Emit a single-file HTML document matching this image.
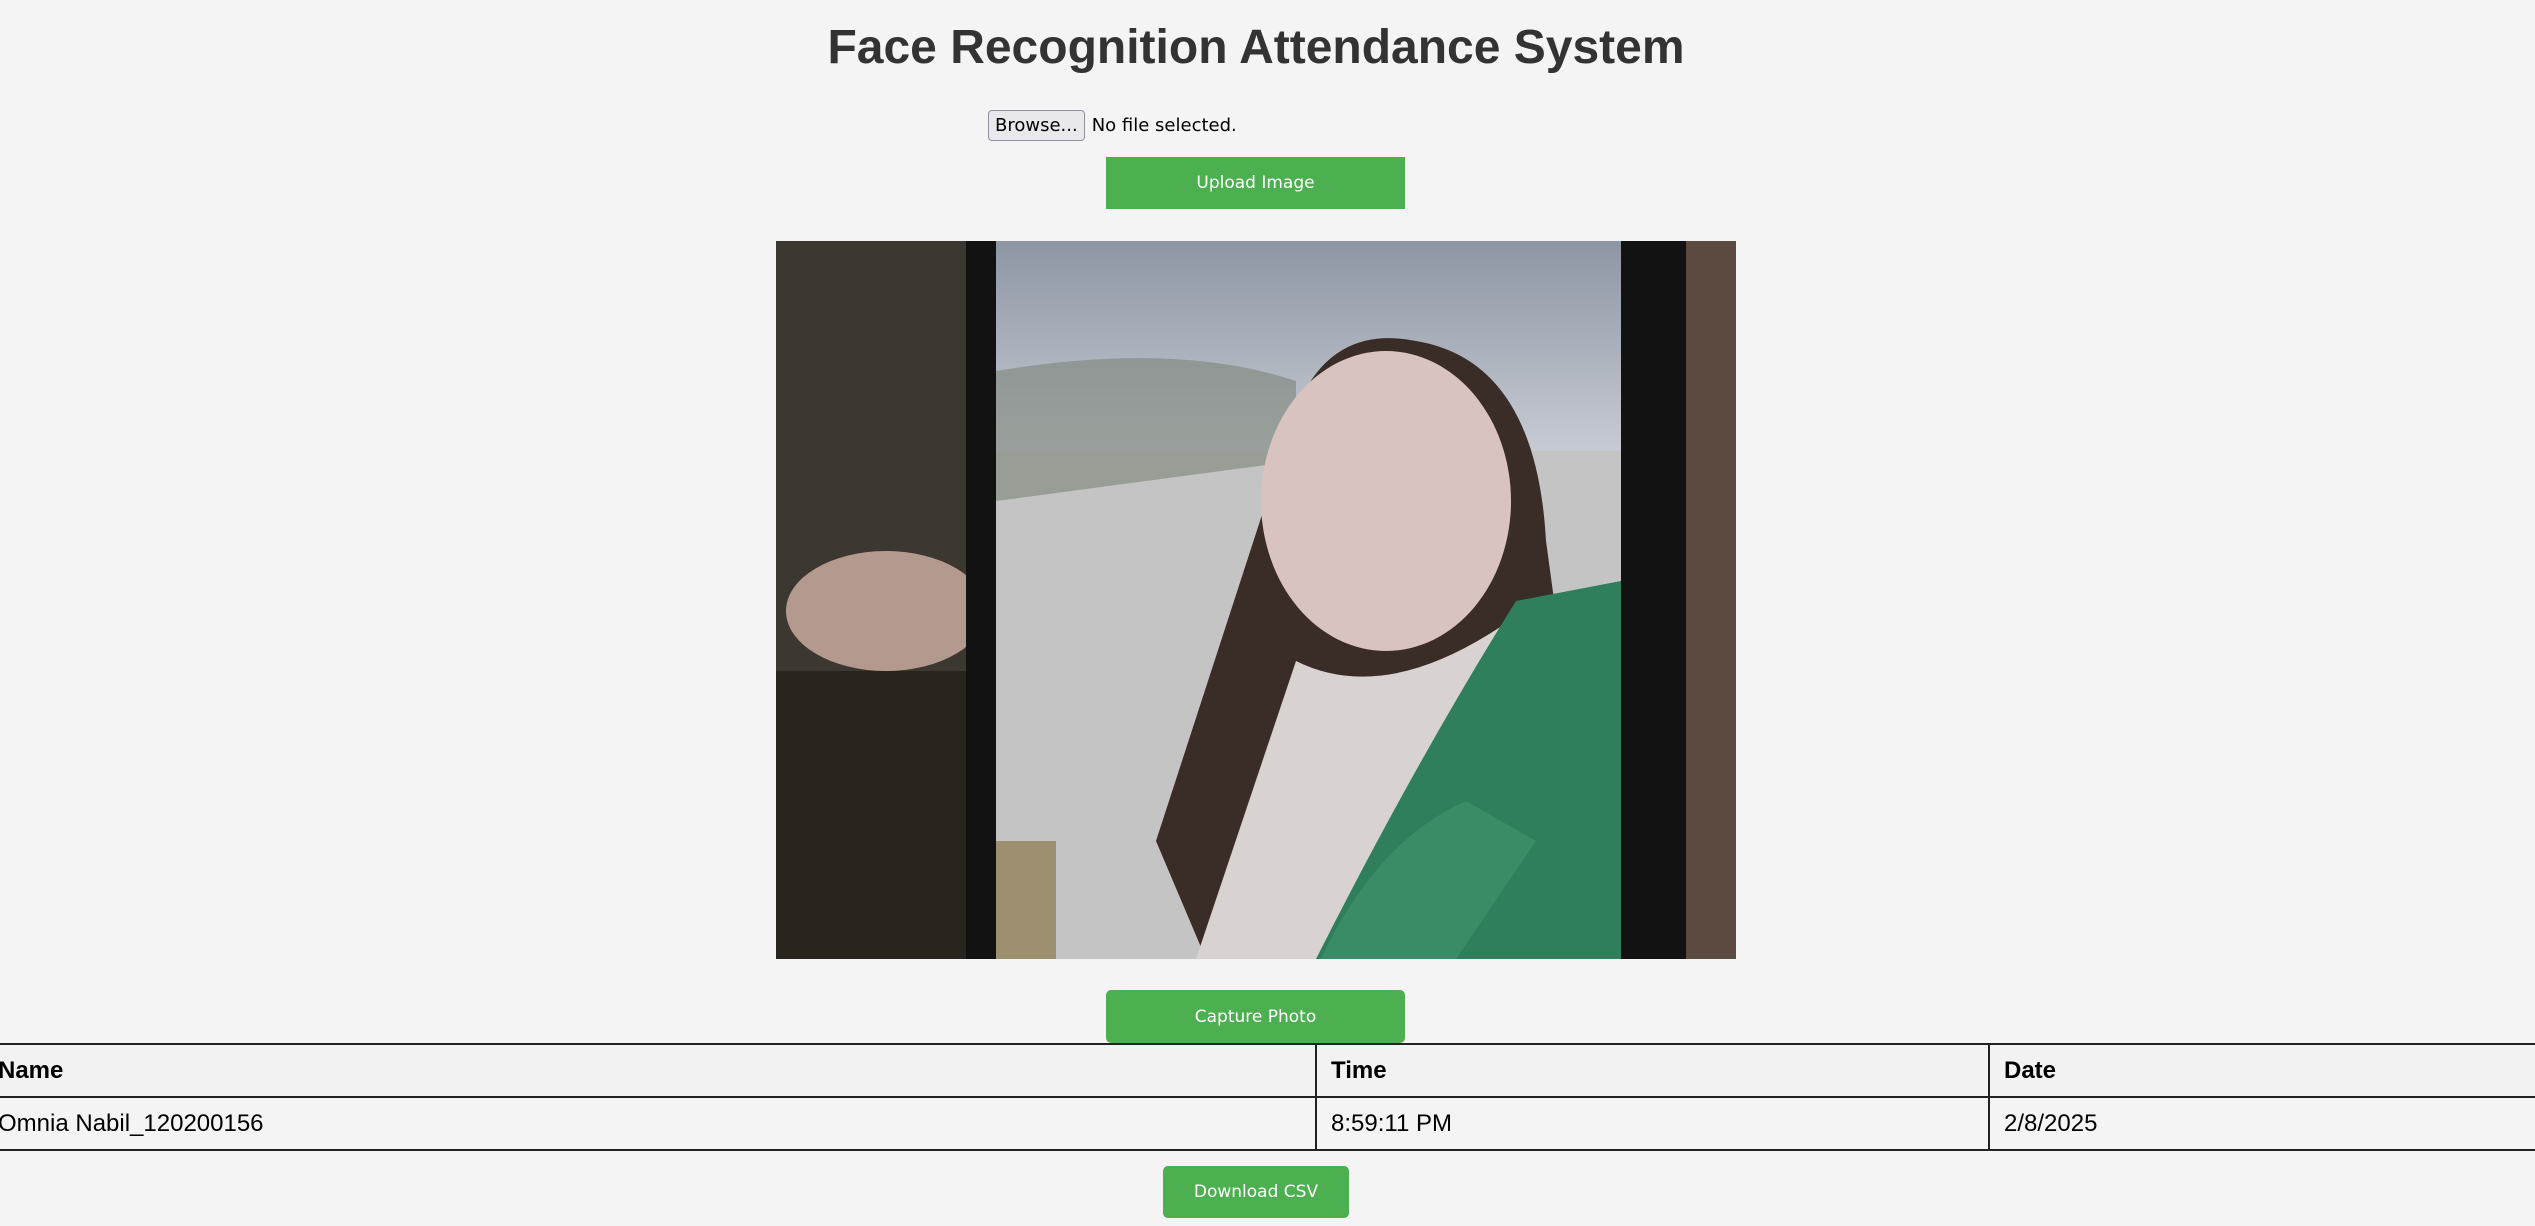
<!DOCTYPE html>
<html><head><meta charset="utf-8"><style>
html,body{margin:0;padding:0;background:#f4f4f4;width:2535px;height:1226px;overflow:hidden;position:relative;font-family:"Liberation Sans",Arial,sans-serif}
h1{position:absolute;left:0;width:2512px;top:20px;margin:0;text-align:center;font-size:48px;font-weight:bold;color:#333;letter-spacing:0}
.file{position:absolute;left:988px;top:110px;height:31px;display:flex;align-items:center;font-family:"DejaVu Sans",sans-serif;font-size:18px;color:#000}
.file .b{border:1px solid #8f8f9d;border-radius:4px;background:#e9e9ed;height:29px;padding:0 6px;display:flex;align-items:center;margin-right:7px}
.btn{position:absolute;background:#4caf50;color:#fff;font-family:"DejaVu Sans",sans-serif;font-size:17px;display:flex;align-items:center;justify-content:center}
table{position:absolute;left:-18px;top:1043px;width:2600px;border-collapse:collapse;font-size:24px;color:#000}
td,th{border:2px solid #222;height:51px;padding:0 0 0 14px;text-align:left}
th{font-weight:bold;background:#f2f2f2}
</style></head><body>
<h1>Face Recognition Attendance System</h1>
<div class="file"><span class="b">Browse...</span>No file selected.</div>
<div class="btn" style="left:1106px;top:157px;width:299px;height:52px">Upload Image</div>
<svg style="position:absolute;left:776px;top:241px" width="960" height="718" viewBox="0 0 960 718">
<defs><linearGradient id="sky" x1="0" y1="0" x2="0" y2="1"><stop offset="0" stop-color="#8e96a4"/><stop offset="0.3" stop-color="#c8ccd4"/><stop offset="1" stop-color="#c9c9c9"/></linearGradient></defs>
<rect width="960" height="718" fill="#3c3730"/>
<rect x="0" y="430" width="200" height="288" fill="#2a241e"/>
<ellipse cx="110" cy="370" rx="100" ry="60" fill="#b49a8e"/>
<rect x="880" y="0" width="80" height="718" fill="#5b4a40"/>
<rect x="190" y="0" width="720" height="718" fill="#121212"/>
<rect x="220" y="0" width="625" height="718" fill="url(#sky)"/>
<rect x="220" y="210" width="625" height="508" fill="#c4c4c4"/>
<path d="M220 130 Q400 100 520 140 L520 220 L220 260Z" fill="#7b8478" opacity=".6"/>
<path d="M510 200 Q540 80 640 100 Q760 120 770 300 L800 520 L620 700 L430 718 L380 600 Z" fill="#3a2c26"/>
<ellipse cx="610" cy="260" rx="125" ry="150" fill="#d9c3c0"/>
<path d="M520 420 Q620 470 760 360 L845 470 L845 718 L420 718 Z" fill="#d8d3d0"/>
<path d="M740 360 L845 340 L845 718 L540 718 Q640 520 740 360Z" fill="#2f7e5c"/>
<path d="M545 718 Q600 600 690 560 L760 600 L680 718Z" fill="#3a8c66"/>
<rect x="220" y="600" width="60" height="118" fill="#9c9070"/>
</svg>
<div class="btn" style="left:1106px;top:990px;width:299px;height:53px;border-radius:5px">Capture Photo</div>
<table><tr><th style="width:1317px">Name</th><th style="width:657px">Time</th><th>Date</th></tr>
<tr><td>Omnia Nabil_120200156</td><td>8:59:11 PM</td><td>2/8/2025</td></tr></table>
<div class="btn" style="left:1163px;top:1166px;width:186px;height:52px;border-radius:5px">Download CSV</div>
</body></html>
